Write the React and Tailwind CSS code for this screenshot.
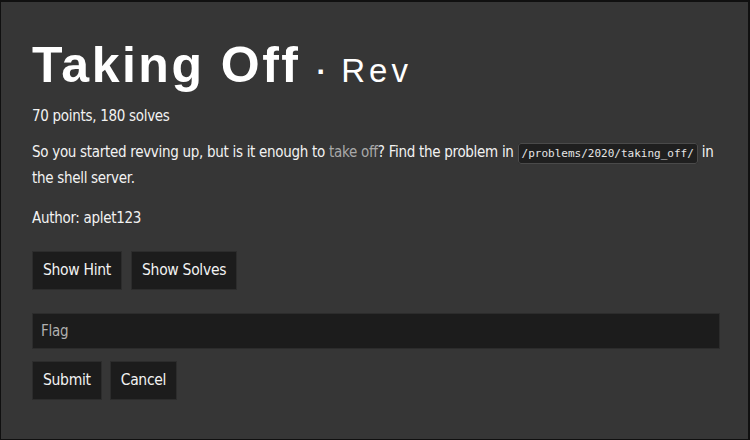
import React from 'react';

const body = { fontFamily: '"DejaVu Sans Condensed", "Liberation Sans", sans-serif' };
const title = { fontFamily: '"Liberation Sans", sans-serif' };

const Btn = ({ children }) => (
  <button className="h-[39px] px-[10px] bg-[#1c1c1c] border border-[#2c2c2c] text-[15.5px] tracking-[-0.3px] text-[#f2f2f2]">
    {children}
  </button>
);

export default function App() {
  return (
    <div className="w-[750px] h-[440px] bg-[#101010] pt-[2px] pl-[1px] pr-[2px] pb-[1px]" style={body}>
      <div className="h-full bg-[#363636] pl-[31px] pr-[28px] pt-[38px] text-[#f2f2f2] text-[15px] tracking-[-0.3px]">
        <h1 className="flex items-baseline leading-none text-white" style={title}>
          <span className="text-[50px] font-bold tracking-[2.5px]">Taking Off</span>
          <span className="ml-[16px] text-[30px] font-bold">·</span>
          <span className="ml-[15px] text-[33px] tracking-[4px]">Rev</span>
        </h1>
        <p className="mt-[14px] leading-[24px]">70 points, 180 solves</p>
        <p className="mt-[12px] leading-[24px]">
          So you started revving up, but is it enough to{' '}
          <a className="text-[#a9a9a9]">take off</a>? Find the problem in{' '}
          <code
            className="px-[3px] py-[3px] bg-[#1f1f1f] border border-[#4a4a4a] rounded-[3px] text-[11px] tracking-normal text-[#e6e6e6]"
            style={{ fontFamily: '"DejaVu Sans Mono", monospace' }}
          >
            /problems/2020/taking_off/
          </code>{' '}
          <span>in</span>
          <br />
          <span>the shell server.</span>
        </p>
        <p className="mt-[16px] leading-[24px]">Author: aplet123</p>
        <div className="mt-[21px] flex gap-[9px]">
          <Btn>Show Hint</Btn>
          <Btn>Show Solves</Btn>
        </div>
        <input
          placeholder="Flag"
          className="mt-[23px] block w-full h-[36px] px-[8px] bg-[#1c1c1c] border border-[#2c2c2c] text-white placeholder:text-[#b0b0b0] outline-none"
        />
        <div className="mt-[12px] flex gap-[8px]">
          <Btn>Submit</Btn>
          <Btn>Cancel</Btn>
        </div>
      </div>
    </div>
  );
}
